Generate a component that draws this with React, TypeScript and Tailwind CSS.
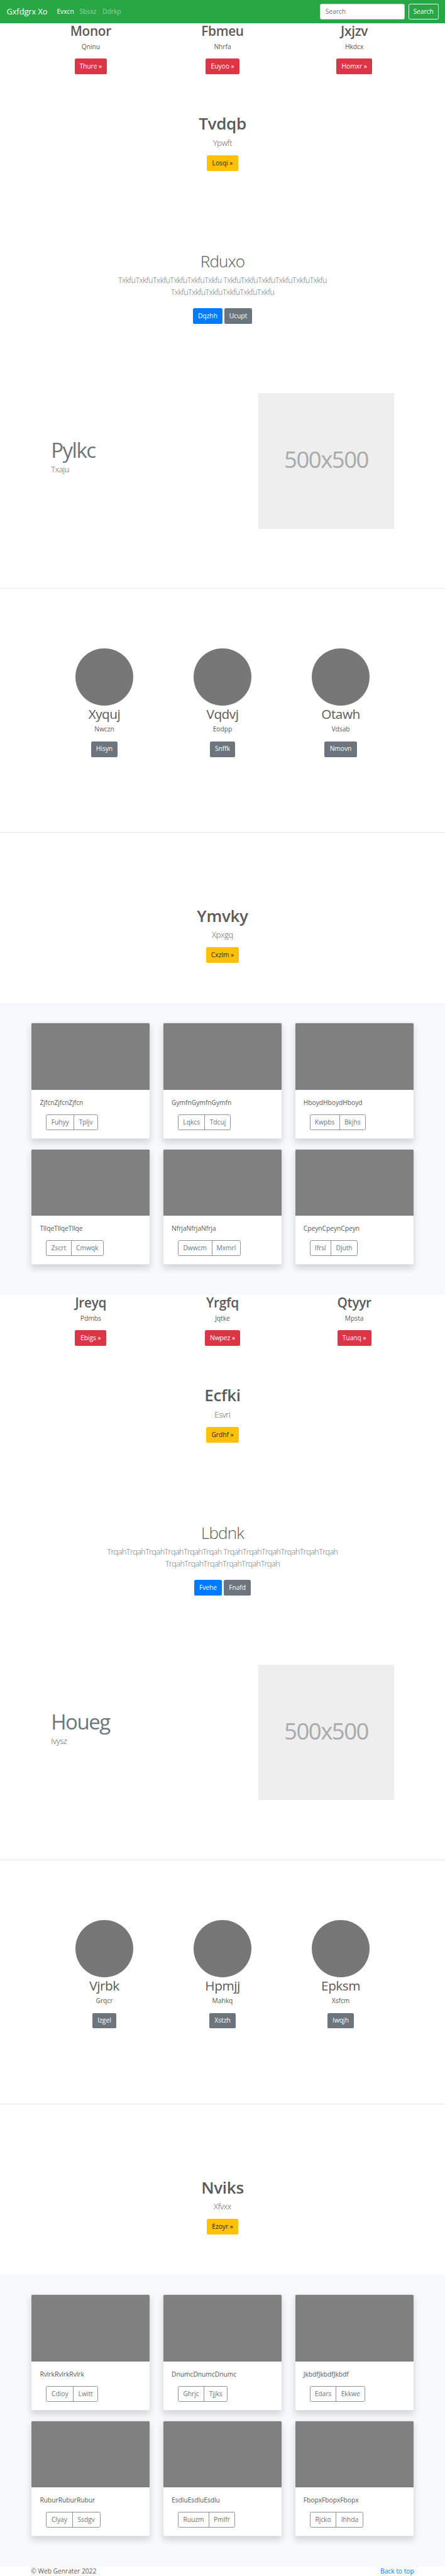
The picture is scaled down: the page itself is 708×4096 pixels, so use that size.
type Item = { title?: string; text?: string; label: string; w: string };
type CardData = { text: string; a: string; aw: string; b: string; bw: string };
type Block = {
  top: Item[];
  hero: Item;
  album: { title: string; word: string; primary: Item; secondary: Item };
  feature: { title: string; text: string };
  people: Item[];
  hero2: Item;
  cards: CardData[];
};

const blocks: Block[] = [
  {
    top: [
      { title: "Monor", text: "Qninu", label: "Thure »", w: "w-19.5" },
      { title: "Fbmeu", text: "Nhrfa", label: "Euyoo »", w: "w-20.5" },
      { title: "Jxjzv", text: "Hkdcx", label: "Homxr »", w: "w-21.5" },
    ],
    hero: { title: "Tvdqb", text: "Ypwft", label: "Losqi »", w: "w-19" },
    album: {
      title: "Rduxo",
      word: "Txkfu",
      primary: { label: "Dqzhh", w: "w-18" },
      secondary: { label: "Ucupt", w: "w-17" },
    },
    feature: { title: "Pylkc", text: "Txaju" },
    people: [
      { title: "Xyquj", text: "Nwczn", label: "Hisyn", w: "w-16.25" },
      { title: "Vqdvj", text: "Eodpp", label: "Snffk", w: "w-15.5" },
      { title: "Otawh", text: "Vdsab", label: "Nmovn", w: "w-19.5" },
    ],
    hero2: { title: "Ymvky", text: "Xpxgq", label: "Cxzlm »", w: "w-20" },
    cards: [
      { text: "ZjfcnZjfcnZjfcn", a: "Fuhyy", aw: "w-16.75", b: "Tpljv", bw: "w-14" },
      { text: "GymfnGymfnGymfn", a: "Lqkcs", aw: "w-16.25", b: "Tdcuj", bw: "w-15.25" },
      { text: "HboydHboydHboyd", a: "Kwpbs", aw: "w-18", b: "Bkjhs", bw: "w-15.25" },
      { text: "TllqeTllqeTllqe", a: "Zscrt", aw: "w-15", b: "Cmwqk", bw: "w-19.25" },
      { text: "NfrjaNfrjaNfrja", a: "Dwwcm", aw: "w-20.5", b: "Mxmrl", bw: "w-17" },
      { text: "CpeynCpeynCpeyn", a: "Ifrsl", aw: "w-12.75", b: "Djuth", bw: "w-15.75" },
    ],
  },
  {
    top: [
      { title: "Jreyq", text: "Pdmbs", label: "Ebigs »", w: "w-19" },
      { title: "Yrgfq", text: "Jqtke", label: "Nwpez »", w: "w-21.5" },
      { title: "Qtyyr", text: "Mpsta", label: "Tuanq »", w: "w-20.5" },
    ],
    hero: { title: "Ecfki", text: "Esvri", label: "Grdhf »", w: "w-19.5" },
    album: {
      title: "Lbdnk",
      word: "Trqah",
      primary: { label: "Fvehe", w: "w-17" },
      secondary: { label: "Fnafd", w: "w-16.5" },
    },
    feature: { title: "Houeg", text: "Ivysz" },
    people: [
      { title: "Vjrbk", text: "Grqcr", label: "Izgel", w: "w-14.75" },
      { title: "Hpmjj", text: "Mahkq", label: "Xstzh", w: "w-15.75" },
      { title: "Epksm", text: "Xsfcm", label: "Iwqjh", w: "w-16" },
    ],
    hero2: { title: "Nviks", text: "Xfvxx", label: "Ezoyr »", w: "w-19" },
    cards: [
      { text: "RvlrkRvlrkRvlrk", a: "Cdioy", aw: "w-16.5", b: "Lwitt", bw: "w-14.25" },
      { text: "DnumcDnumcDnumc", a: "Ghrjc", aw: "w-15.75", b: "Tjjks", bw: "w-13.75" },
      { text: "JkbdfJkbdfJkbdf", a: "Edars", aw: "w-16", b: "Ekkwe", bw: "w-17" },
      { text: "RuburRuburRubur", a: "Clyay", aw: "w-15.75", b: "Ssdgv", bw: "w-16.5" },
      { text: "EsdluEsdluEsdlu", a: "Ruuzm", aw: "w-18.75", b: "Pmlfr", bw: "w-15.25" },
      { text: "FbopxFbopxFbopx", a: "Rjcko", aw: "w-16", b: "Ihhda", bw: "w-16" },
    ],
  },
];

const tones = {
  danger: "bg-[#dc3545] text-white",
  warning: "bg-[#ffc107] text-[#212529]",
  primary: "bg-[#007bff] text-white",
  secondary: "bg-[#6c757d] text-white",
};

function Button({ item, tone }: { item: Item; tone: keyof typeof tones }) {
  return (
    <button
      className={`flex h-9.5 items-center justify-center rounded-[2.6px] whitespace-nowrap ${tones[tone]} ${item.w}`}
    >
      {item.label}
    </button>
  );
}

function Hero({ item }: { item: Item }) {
  return (
    <div className="flex flex-col items-center">
      <h1 className="mb-2 h-12 pt-0.5 text-[26px] leading-12 font-semibold tracking-[-0.3px]">{item.title}</h1>
      <p className="mb-4 h-7.5 pt-0.5 text-[12.8px] leading-7.5 font-light tracking-[-0.3px]">{item.text}</p>
      <Button item={item} tone="warning" />
    </div>
  );
}

function Card({ card }: { card: CardData }) {
  return (
    <div className="h-70.5 overflow-hidden rounded-[2.6px] border border-black/10 bg-white shadow-[0_5.2px_10.5px_rgba(0,0,0,0.15)]">
      <div className="h-40.25 bg-[#808080]" />
      <div className="p-5">
        <p className="mb-4 h-6 leading-6">{card.text}</p>
        <div className="ml-3.75 flex h-9.5 w-fit rounded-[2.6px] border border-[#8b9299] text-[#6c757d]">
          <button className={`flex items-center justify-center border-r border-[#8b9299] ${card.aw}`}>
            {card.a}
          </button>
          <button className={`flex items-center justify-center ${card.bw}`}>{card.b}</button>
        </div>
      </div>
    </div>
  );
}

function PageBlock({ block }: { block: Block }) {
  const long = block.album.word.repeat(6);
  return (
    <>
      <section className="mx-auto grid h-54.75 w-240 grid-cols-3">
        {block.top.map((item) => (
          <div key={item.title} className="flex flex-col items-center">
            <h2 className="mb-2 h-9.5 pt-0.25 text-[20.8px] leading-9.5 font-semibold tracking-[-0.3px]">
              {item.title}
            </h2>
            <p className="mb-4 h-6 leading-6">{item.text}</p>
            <Button item={item} tone="danger" />
          </div>
        ))}
      </section>

      <section className="h-83.25">
        <Hero item={block.hero} />
      </section>

      <section className="flex h-86.5 flex-col items-center text-center">
        <h1 className="mb-2 h-12 pt-0.5 text-[26px] leading-12 font-light tracking-[-0.8px]">{block.album.title}</h1>
        <p className="mb-6 h-15 pt-0.25 text-[12.6px] leading-7.5 font-light tracking-[-0.55px] whitespace-nowrap text-[#6c757d]">
          {long} {long}
          <br />
          {long}
        </p>
        <div className="flex gap-1">
          <Button item={block.album.primary} tone="primary" />
          <Button item={block.album.secondary} tone="secondary" />
        </div>
      </section>

      <section className="flex h-118.5 justify-between border-b border-black/10 pr-31 pl-31">
        <div className="pt-28.25">
          <h2 className="h-12.75 text-[33px] leading-12.75 tracking-[-1.5px] text-[#6c757d]">{block.feature.title}</h2>
          <p className="mt-1.75 h-7.5 text-[12.8px] leading-7.5 font-light tracking-[-0.3px]">{block.feature.text}</p>
        </div>
        <div className="flex size-82.25 items-center justify-center bg-[#eeeeee] pb-2 text-[36.5px] tracking-[-1.5px] text-[#aaaaaa]">
          500x500
        </div>
      </section>

      <section className="flex h-148.25 justify-center border-b border-black/10 pt-36.25">
        {block.people.map((item) => (
          <div key={item.title} className="flex w-71.75 flex-col items-center">
            <div className="size-35 shrink-0 rounded-full bg-[#777777]" />
            <h2 className="mb-2 h-9.5 pt-0.25 text-[20.8px] leading-9.5 tracking-[-0.5px]">{item.title}</h2>
            <p className="mb-4 h-6 leading-6">{item.text}</p>
            <Button item={item} tone="secondary" />
          </div>
        ))}
      </section>

      <section className="h-103.25 pt-44">
        <Hero item={block.hero2} />
      </section>

      <section className="h-177 bg-[#f8f9fa] pt-12">
        <div className="mx-auto grid w-232.5 grid-cols-3 gap-x-7.5 gap-y-6">
          {block.cards.map((card) => (
            <Card key={card.text} card={card} />
          ))}
        </div>
      </section>
    </>
  );
}

export default function App() {
  return (
    <div className="w-full overflow-hidden bg-white font-['Open_Sans','Noto_Sans',sans-serif] text-[10.3px] tracking-[-0.05px] text-[#5a5a5a] [--spacing:2.6208px]">
      <nav className="flex h-14 items-center bg-[#28a745] px-4 text-white">
        <span className="w-30.5 text-[12.8px]">Gxfdgrx Xo</span>
        <span className="w-13.75">Evxcn</span>
        <span className="w-14 text-white/50">Sbsxz</span>
        <span className="text-white/50">Ddrkp</span>
        <input
          className="ml-auto h-9.5 w-51.75 rounded-[2.6px] border border-[#ced4da] bg-white px-3 placeholder:text-[#6c757d]"
          placeholder="Search"
        />
        <button className="ml-2 h-9.5 w-18.25 rounded-[2.6px] border border-[#f8f9fa]">Search</button>
      </nav>
      {blocks.map((block) => (
        <PageBlock key={block.hero.title} block={block} />
      ))}
      <footer className="mx-auto flex h-6 w-232.5 justify-between leading-6">
        <span>© Web Genrater 2022</span>
        <a className="text-[#007bff]">Back to top</a>
      </footer>
    </div>
  );
}
